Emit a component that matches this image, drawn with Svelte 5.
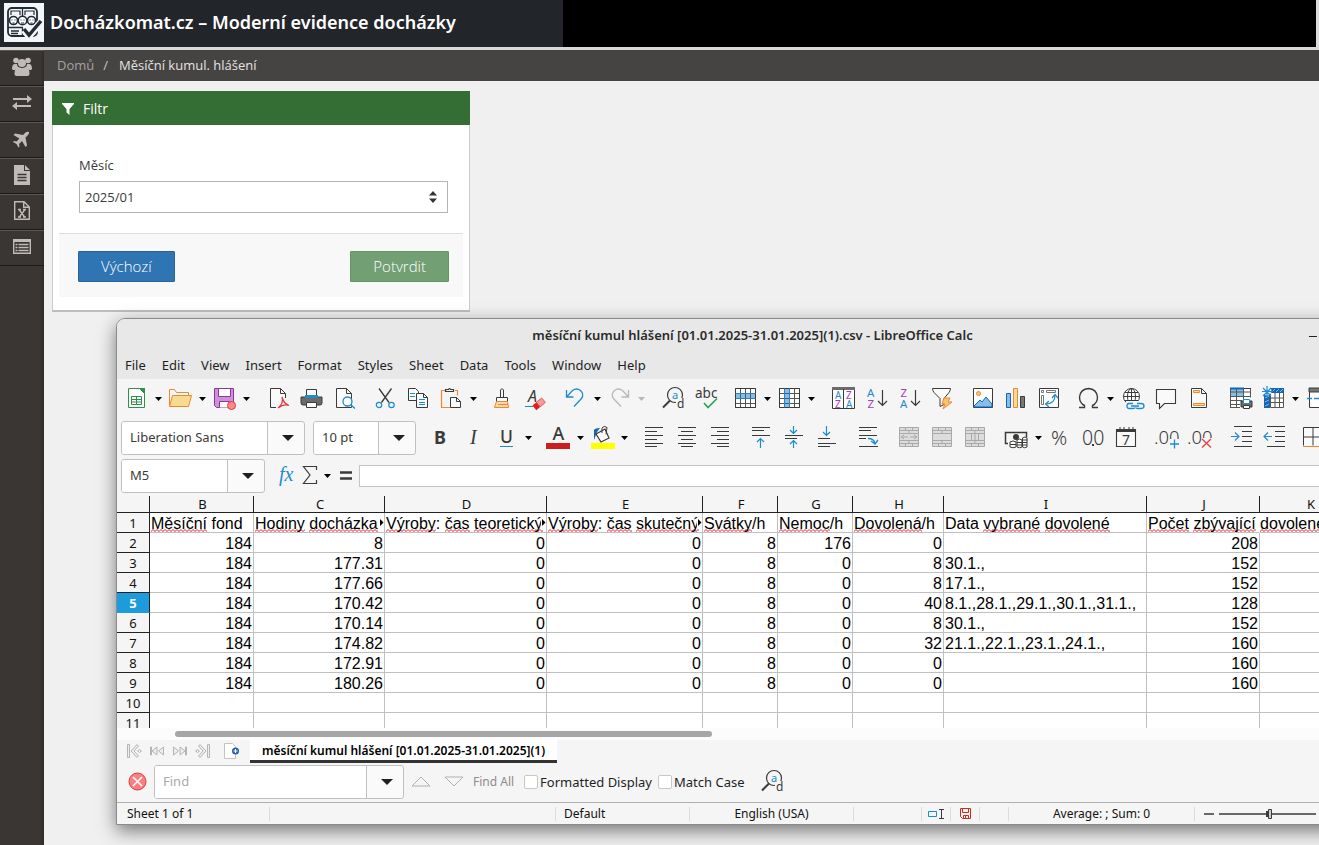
<script>
  const D = '#3a3a38';
  const B = '#1e8bcd';
  const line = (d, c = D, w = 1, fill = 'none') =>
    `<path d="${d}" fill="${fill}" stroke="${c}" stroke-width="${w}"/>`;
  const glyph = (t, x, y, size, c = D, extra = '') =>
    `<text x="${x}" y="${y}" font-size="${size}" fill="${c}" font-family="Noto Sans, sans-serif" ${extra}>${t}</text>`;
  const page = 'M4.5 2.5h10l5 5v14h-15z';
  const grid = 'M2.5 2.5h20v19h-20zM2.5 7.5h20M2.5 12.5h20M2.5 17.5h20M7.5 2.5v19M12.5 2.5v19M17.5 2.5v19';
  const loupe =
    `<circle cx="14" cy="9" r="7.5" fill="none" stroke="${D}" stroke-width="1.2"/>` +
    `<path d="M2 21.500l7-7" stroke="${D}" stroke-width="2"/><path d="M15 12h9v10h-9z" fill="#f5f5f5"/>` +
    glyph('a', 11, 12.5, 11, B) + glyph('d', 16, 21.5, 12);
  const merged = line('M2.500 2.500h19v19h-19zM2.500 5.500h19M2.500 8.500h19M2.500 15.500h19M2.500 18.500h19M8.500 2.500v3M15.500 2.500v3M12 5.500v3M8.500 18.500v3M15.500 18.500v3M12 15.500v3', '#a9a9a9', 1, '#dcdcdc');

  const icons = {
    new:
      line('M4.500 2.500h11l5 5v14h-16z', '#2f8f4b', 1, '#fff') + `<path d="M15 2h6v6z" fill="#2f8f4b"/>` +
      line('M7.500 10.500h10v8h-10zM7.500 13.500h10M7.500 16h10M12.500 10.500v8', '#2f8f4b'),
    open:
      line('M1.500 20.500v-17h5l2 3h12v3', '#ed8733', 1, '#fafafa') + line('M1.500 20.500l3-11h19l-3 11z', '#ed8733', 1, '#f8db8f'),
    save:
      line('M2.500 2.500h19v19h-17l-2-2z', '#8e35a0', 1, '#cf8fd9') + line('M6.500 2.500h12v8h-12z', '#8e35a0', 1, '#fff') +
      line('M7.500 21.500v-6h10v6', '#8e35a0', 1, '#fff') + `<circle cx="19.500" cy="19.500" r="4" fill="#f98b8b" stroke="#dd3b3b"/>`,
    pdf:
      line(page, D, 1, '#fafafa') + line('M14.500 2.500v5h5') +
      `<path d="M16 12h7v11h-13v-4z" fill="#f5f5f5"/>` +
      line('M12 22c4-3 5.500-6 4-11c1 5 3 7 7 8.500c-4-1.500-7-.5-11 2.500', '#e23c3c', 1.3),
    print:
      line('M7.500 10.500v-7h10v7', D, 1, '#fff') + `<path d="M2 11h21v6q0 2-2 2h-17q-2 0-2-2z" fill="#6b6b69" stroke="${D}"/><path d="M6 9h13v3h-13z" fill="${B}"/>` +
      line('M7.500 16.500h10v5h-10z', D, 1, '#fff'),
    preview:
      line(page, D, 1, '#fafafa') + line('M14.500 2.500v5h5') +
      `<circle cx="15.500" cy="15.500" r="4.500" fill="#fff" stroke="${B}" stroke-width="1.300"/>` + line('M19 19l4 3.500', B, 1.4),
    cut:
      line('M6 2.500l10 14M18.500 2.500l-10 14', D, 1.3) +
      `<circle cx="6" cy="19" r="2.700" fill="none" stroke="${B}" stroke-width="1.200"/><circle cx="18.500" cy="19" r="2.700" fill="none" stroke="${B}" stroke-width="1.200"/>`,
    copy:
      line('M2.500 2.500h7l3 3v9h-10z', D, 1, '#fafafa') + line('M4 7.500h5M4 10.500h5', B) +
      line('M10.500 7.500h7l4 4v10h-11z', D, 1, '#fafafa') + line('M17.500 7.500v4h4') + line('M13 13.500h6M13 16.500h6M13 18.500h6', B),
    paste:
      line('M7 4.500h-4.500v17h9M16 4.500h2.500v5', '#ed8733', 1.2) + line('M6.500 5.500v-2h3q1-2 2 0h3v2z', D, 1.2) +
      line('M11.500 11.500h6l4 4v6h-10z', D, 1, '#fafafa') + line('M17.500 11.500v4h4'),
    brush:
      line('M11.500 11v-7q1.500-3 3 0v7', D) + line('M7.500 15.500v-4h11v4z', D, 1, '#fff') +
      line('M7.500 15.500h11l1 6h-14z', '#ed8733', 1, '#fbd9a5') + line('M9 18.500h10', '#ed8733'),
    clear:
      glyph('A', 6, 16, 16, D, 'font-style="italic"') + line('M3 20.500h8', B) +
      `<g transform="rotate(-40 17 18)"><rect x="11" y="15" width="6" height="6" fill="#e02020"/><rect x="16" y="15" width="7" height="6" rx="1" fill="#f79a9a" stroke="#e05050" stroke-width=".8"/></g>`,
    undo: line('M3.500 4v7h7M3.500 11l6-6.500q4-3 8 0q4 4 1 8l-7.500 8', B, 1.3),
    redo: line('M21.500 4v7h-7M21.500 11l-6-6.500q-4-3-8 0q-4 4-1 8l7.500 8', '#b8b8b8', 1.3),
    find: loupe,
    abc: glyph('abc', 1, 12, 13.5) + line('M10 17l4 4.500l9-9', '#23a455', 1.6),
    row: `<path d="M3 2h19v20h-19z" fill="#fff"/><path d="M2 7h21v5h-21z" fill="#83beec"/>` + line(grid, '#555553') + line('M2.500 2.500h20v19h-20z') + line('M2.500 7.500h20M2.500 12.500h20', '#2a80c4'),
    col: `<path d="M3 2h19v20h-19z" fill="#fff"/><path d="M8 2h5v20h-5z" fill="#83beec"/>` + line(grid, '#555553') + line('M2.500 2.500h20v19h-20z') + line('M7.500 2.500v19M12.500 2.500v19', '#2a80c4'),
    sort:
      line('M1.500 1.500h22v21h-22z', D, 1, '#fff') + `<path d="M1 1h23v3h-23z" fill="#6b6b69"/>` + line('M12.500 3v19') +
      glyph('A', 4, 12.5, 10, B) + glyph('Z', 4, 21.5, 10, '#a83bb5') + glyph('Z', 15, 12.5, 10, '#a83bb5') + glyph('A', 15, 21.5, 10, B),
    az: glyph('A', 3, 10.5, 11.5, B) + glyph('Z', 3.5, 22, 11.5, '#a83bb5') + line('M18.500 4v15M14 15l4.500 4.500l4.500-4.500', D, 1.2),
    za: glyph('Z', 3.5, 10.5, 11.5, '#a83bb5') + glyph('A', 3, 22, 11.5, B) + line('M18.500 4v15M14 15l4.500 4.500l4.500-4.500', D, 1.2),
    filter: line('M2.500 2.500h18q0 2-1.500 4l-5 6v6l-4 2v-8l-6-6q-1.500-2-1.500-4z', D, 1, '#fafafa') + line('M14 12h6l-2 4h4l-9 7l2-5h-3z', '#ed8733', 1, '#fbc36b'),
    image:
      line('M2.500 2.500h19v19h-19z', D, 1, '#fff') + `<circle cx="7.500" cy="7.500" r="2" fill="#fbc36b" stroke="#ed8733"/>` +
      `<path d="M3 20l6-6l2 2l4-5l6 7v3h-18z" fill="#83beec" stroke="#1565b0"/>`,
    chart:
      line('M2.500 7.500h4v14h-4z', '#1565b0', 1, '#83beec') + line('M9.500 2.500h4v19h-4z', '#ed8733', 1, '#fbdd95') + line('M16.500 10.500h4v11h-4z', D, 1, '#777774'),
    pivot:
      line('M2.500 2.500h19v19h-19z', D, 1, '#fff') + line('M4.500 4.500h2v2h-2zM9.500 4.500h9v2h-9zM4.500 9.500h2v9h-2z', '#777774') +
      line('M9 18q9 0 9-9M12 15l-3.500 3l3.500 3M15 12l3-3.500l3 3.500', B, 1.2),
    omega: line('M3 21.500h5.500v-2q-5-2.500-5-8.500q1-8 9-8.500q8 .5 9 8.500q0 6-5 8.500v2h5.500', D, 1.4),
    link:
      `<circle cx="10.500" cy="10.500" r="8" fill="#fff" stroke="${D}"/><ellipse cx="10.500" cy="10.500" rx="4" ry="8" fill="none" stroke="${D}"/>` +
      line('M2.500 10.500h16M10.500 2.500v16M4 6.500h13M4 14.500h13') + `<path d="M5 15h19v8h-19z" fill="#f5f5f5"/>` +
      line('M12 17.500h-4q-2 0-2 2.500t2 2.500h4q2 0 2-1M16 17.500h4q3 0 3 2.500t-3 2.500h-3q-2 0-2-1M10 20h8', B, 1.3),
    comment: line('M2.500 3.500h19v14h-11l-5 5v-5h-3z', D, 1.1, '#fafafa'),
    header: line(page, D, 1, '#fafafa') + line('M14.500 2.500v5h5') + line('M6.500 4.500h6v2h-6zM6.500 17.500h11v2h-11z', '#ed8733', 1, '#fbdd95'),
    area:
      `<path d="M2 2h20v20h-20z" fill="#fff"/><path d="M2 2h14v8h-14z" fill="#83beec"/>` + line('M2.500 2v19M22.500 2.500v9M2 6h20M2 10.500h20M2 14.500h12M2 18.500h10M2 21.500h10M8.500 2v20M15.500 2v12', '#555553') +
      line('M2 2.500h21', D) + line('M2 2.500h14', '#1565b0', 2) + `<path d="M13 15h11v6h-11z" fill="#6b6b69" stroke="${D}"/>` + line('M15.500 17.500v-4h6v4z', B, 1, '#fff') + line('M15.500 19.500h6v3h-6z', D, 1, '#fff'),
    freeze:
      `<path d="M4 3h19v19h-19z" fill="#fff"/>` + line('M9.500 7v14.500h13v-19M9 12h13M9 16.500h13M14 7v14M18.500 7v14', '#555553') +
      `<path d="M9 2h14v5h-14zM3 8h6v14h-6z" fill="#1565b0"/>` + line('M11 6l3-3M15 6l3-3M19 6l3-3M4 12l4-2M4 16l4-2M4 20l4-2', '#83beec') + `<circle cx="6" cy="5" r="4.500" fill="#f5f5f5"/>` + line('M6 0v11M1 5.500h11M2 2l8 8M10 2l-8 8', '#1e8bcd', 1.2),
    split: line('M4.500 2.500h19v19h-19z', D, 1, '#fff') + `<path d="M4 2h20v4h-20z" fill="#777774" stroke="${D}"/>` + line('M2 12.500h5M9 12.500h5', B, 1.3),
    bold: glyph('B', 6, 19, 18, D, 'font-weight="700"'),
    italic: glyph('I', 9, 19, 20, D, 'font-style="italic" style="font-family: Liberation Serif, serif"'),
    underline: glyph('U', 6, 18, 17.5, D, 'font-weight="500"') + line('M6 21.500h13', B),
    color: glyph('A', 6.5, 15, 18, D, 'font-weight="500"') + `<path d="M0 18h24v6h-24z" fill="#c91f1f"/>`,
    fill:
      `<path d="M4 15v-10q1-2 6-2l-3 4z" fill="#1565b0"/>` + line('M6 9l9-5l4 9l-8 4z', D, 1.2, '#fafafa') + line('M12 8v-5q2-3 5-.5l-1 7', D) + `<path d="M1 18h24v6h-24z" fill="#ff0"/>`,
    left: line('M3 2.500h18M3 6.500h12M3 10.500h18M3 14.500h12M3 18.500h18M3 21.500h12'),
    center: line('M3 2.500h18M6 6.500h12M3 10.500h18M6 14.500h12M3 18.500h18M6 21.500h12'),
    right: line('M3 2.500h18M9 6.500h12M3 10.500h18M9 14.500h12M3 18.500h18M9 21.500h12'),
    top: line('M3 2.500h18M3 5.500h12M3 10.500h18') + line('M11.500 23v-9M8 17l3.500-3.500l3.500 3.500', B, 1.2),
    middle: line('M3 10.500h18M3 13.500h12') + line('M11.500 1v7M8 5l3.500 3.500l3.500-3.500M11.500 23v-7M8 19l3.500-3.500l3.500 3.500', B, 1.2),
    bottom: line('M3 13.500h12M3 18.500h18M3 21.500h12') + line('M11.500 1v9M8 7l3.500 3.500l3.500-3.500', B, 1.2),
    wrap: line('M3 2.500h18M3 5.500h12M3 10.500h18M3 13.500h7M3 21.500h19') + line('M12 13.500q6 0 7 5M15 16l4 3l3-4', B, 1.3),
    merge: merged + line('M4 12h7M13 12h7M7 10l-3 2l3 2M17 10l3 2l-3 2', '#a9a9a9'),
    mergec: merged,
    unmerge: merged + line('M8.500 8.500v7M12 8.500v7M15.500 8.500v7', '#a9a9a9'),
    currency:
      line('M4 18.500h-2.500v-11h21v5', D, 1.5) + `<circle cx="12" cy="12" r="3" fill="${D}"/>` +
      `<path d="M6 17q3-2 6 0v5q-3 1.500-6 0zM13 15q2.500-2 5 0v7q-2.500 1.500-5 0zM18.500 13q2.500-2 4.500 0v9q-2.500 1.500-4.500 0z" fill="#fff" stroke="${D}"/>` + line('M6 19.500h6M13 17.500h10M13 20h10M18.500 15h5'),
    percent: glyph('%', 3, 19.5, 20, D, 'font-weight="300"'),
    number: glyph('00', 1, 19.5, 19.5, D, 'font-weight="300"') + `<path d="M11 19h2v2h-2z" fill="${D}"/>`,
    date: line('M2.500 4.500h19v17h-19z', D, 1.1, '#fafafa') + `<path d="M2 4h20v3h-20z" fill="${D}"/>` + line('M6 2v3M10 2v3M15 2v3M19 2v3') + glyph('7', 8, 19.5, 14),
    adddec: glyph('.00', -1, 18.5, 18.5, D, 'font-weight="300"') + `<path d="M15 14h10v10h-10z" fill="#f5f5f5"/>` + line('M19.500 14.500v9M15 19h9', B, 1.3),
    deldec: glyph('.00', -1, 18.5, 18.5, D, 'font-weight="300"') + `<path d="M14 13h11v10h-11z" fill="#f5f5f5"/>` + line('M14 14l9 8.500M23 14l-9 8.500', '#e84040', 1.3),
    indent: line('M5 1.500h18M13 6.500h10M13 11.500h10M13 16.500h10M5 21.500h18') + line('M2 11.500h8M6 7.500l4 4l-4 4', B, 1.2),
    outdent: line('M5 1.500h18M13 6.500h10M13 11.500h10M13 16.500h10M5 21.500h18') + line('M2 11.500h8M6 7.500l-4 4l4 4', B, 1.2),
    borders: line('M2.500 20.500v-18h19v18M2.500 12h19M12 2.500v18', D, 1, '#fafafa') + line('M2 21.500h20', '#ed8733'),
    fx: `<text x="5" y="18" font-size="20" fill="${B}" font-style="italic" font-family="Liberation Serif, serif">fx</text>`,
    sum: line('M18.500 7v-3.500h-13l6.500 8.500l-6.500 8.500h13v-3.500', D, 1.2),
    equals: line('M7 9.500h12M7 15.500h12', D, 2.4),
  };

  const formatA = [
    { gap: 1, items: ['new', '>', 'open', '>', 'save', '>'] },
    { gap: 10, items: ['pdf', 'print', 'preview'] },
    { gap: 8, items: ['cut', 'copy', 'paste', '>'] },
    { gap: 6, items: ['brush', 'clear'] },
    { gap: 8, items: ['undo', '>', 'redo', '-'] },
    { gap: 10, items: ['find', 'abc'] },
    { gap: 6, items: ['row', '>', 'col', '>'] },
    { gap: 10, items: ['sort', 'az', 'za', 'filter'] },
    { gap: 8, items: ['image', 'chart', 'pivot'] },
    { gap: 6, items: ['omega', '>'] },
    { gap: 1, items: ['link', 'comment', 'header'] },
    { gap: 8, items: ['area', 'freeze', '>', 'split'] },
  ];
  const formatB = [
    { gap: 8, items: ['bold', 'italic', 'underline', '>'] },
    { gap: 8, items: ['color', '>', 'fill', '>'] },
    { gap: 8, items: ['left', 'center', 'right'] },
    { gap: 8, items: ['top', 'middle', 'bottom'] },
    { gap: 8, items: ['wrap'] },
    { gap: 8, items: ['merge', 'mergec', 'unmerge'] },
    { gap: 8, items: ['currency', '>', 'percent', 'number', 'date'] },
    { gap: 8, items: ['adddec', 'deldec'] },
    { gap: 8, items: ['indent', 'outdent'] },
    { gap: 6, items: ['borders'] },
  ];

  const menus = ['File', 'Edit', 'View', 'Insert', 'Format', 'Styles', 'Sheet', 'Data', 'Tools', 'Window', 'Help'];

  const columns = [
    { id: 'B', width: 104, words: ['*Měsíční', ' fond'] },
    { id: 'C', width: 131, words: ['*Hodiny', ' ', '*docházka'], more: true },
    { id: 'D', width: 162, words: ['*Výroby', ': ', '*čas', ' ', '*teoretický'], more: true },
    { id: 'E', width: 156, words: ['*Výroby', ': ', '*čas', ' ', '*skutečný'], more: true },
    { id: 'F', width: 75, words: ['*Svátky', '/h'] },
    { id: 'G', width: 75, words: ['*Nemoc', '/h'] },
    { id: 'H', width: 91, words: ['*Dovolená', '/h'] },
    { id: 'I', width: 203, words: ['Data ', '*vybrané', ' ', '*dovolené'] },
    { id: 'J', width: 113, words: ['*Počet', ' ', '*zbývající', ' ', '*dovolené'], spill: true },
    { id: 'K', width: 101, words: [] },
  ];
  const rows = [
    ['184', '8', '0', '0', '8', '176', '0', '', '208', ''],
    ['184', '177.31', '0', '0', '8', '0', '8', '30.1.,', '152', ''],
    ['184', '177.66', '0', '0', '8', '0', '8', '17.1.,', '152', ''],
    ['184', '170.42', '0', '0', '8', '0', '40', '8.1.,28.1.,29.1.,30.1.,31.1.,', '128', ''],
    ['184', '170.14', '0', '0', '8', '0', '8', '30.1.,', '152', ''],
    ['184', '174.82', '0', '0', '8', '0', '32', '21.1.,22.1.,23.1.,24.1.,', '160', ''],
    ['184', '172.91', '0', '0', '8', '0', '0', '', '160', ''],
    ['184', '180.26', '0', '0', '8', '0', '0', '', '160', ''],
    Array(10).fill(''),
    Array(10).fill(''),
  ];

  const nav = [
    '<circle cx="5" cy="4.500" r="2.800"/><circle cx="17" cy="4.500" r="2.800"/><circle cx="11" cy="7" r="4"/><path d="M1 13q0-5 3-5h2q0 3 2 3.500q-3 0-4 2.500h-2zM21 13q0-5-3-5h-2q0 3-2 3.500q3 0 4 2.500h2z"/><path d="M3.500 18q0-7 4-7q3.500 2 7 0q4 0 4 7q0 2-2 2h-11q-2 0-2-2z"/>',
    '<path d="M2 6h14v-3l5 4l-5 4v-3h-14zM20 13h-14v-3l-5 4l5 4v-3h14z"/>',
    '<path d="M18 4q-2-1-4 1l-2 2l-8-1.500l-1.500 1.500l6 3.500l-3 3l-2.500-.5l-1 1l3.500 2l2 3.500l1-1l-.5-2.500l3-3l3.500 6l1.500-1.500l-1.500-8l2-2q2-2 1.500-3.500z"/>',
    '<path d="M3 1h10v6h6v14h-16zM14 1l5 5h-5z"/><path d="M6.500 10.500h9M6.500 13.500h9M6.500 16.500h9" stroke="#3a3633" stroke-width="1.300"/>',
    '<path d="M3.700 1.700h9.300l5.300 5.300v12.300h-14.600zM12.700 2v5.300h5.300" fill="none" stroke="#c0bbb8" stroke-width="1.400"/><path d="M8 9.500l6 8M14 9.500l-6 8M7 9.500h3M12 9.500h3M7 17h3M12 17h3" stroke="#c0bbb8" stroke-width="1.300"/>',
    '<path d="M2.700 3.700h16.600v13.600h-16.600z" fill="none" stroke="#c0bbb8" stroke-width="1.400"/><path d="M2 3h18v3h-18z"/><path d="M4.500 8.500h2M4.500 11.500h2M4.500 14.500h2M7.500 8.500h10M7.500 11.500h10M7.500 14.500h10" stroke="#c0bbb8" stroke-width="1.500"/>',
  ];
  const navNames = ['Zaměstnanci', 'Průchody', 'Nepřítomnosti', 'Sestavy', 'Exporty', 'Seznam'];

  let month = $state('2025/01');
  let search = $state('');
</script>

{#snippet tools(groups)}
  {#each groups as g}
    <div class="group gap{g.gap}">
      {#each g.items as it}
        {#if it === '>' || it === '-'}
          <button class="drop" class:off={it === '-'} aria-label="More"><svg width="7" height="4" viewBox="0 0 7 4"><path d="M0 0h7l-3.500 4z" /></svg></button>
        {:else}
          <button class="tool" aria-label={it}><svg width="25" height="25" viewBox="0 0 25 25">{@html icons[it]}</svg></button>
        {/if}
      {/each}
    </div>
  {/each}
{/snippet}

{#snippet open()}
  <button class="open" aria-label="Open list"><svg width="12" height="6" viewBox="0 0 12 6"><path d="M0 0h12l-6 6z" fill="#1f1f1f" /></svg></button>
{/snippet}

<div class="page">
  <header>
    <div class="brand">
      <svg class="logo" width="40" height="39" viewBox="0 0 40 39" fill="none" stroke="#222c35" stroke-width="2">
        <path d="M0 0h40v39h-40z" fill="#f3f6f8" stroke="none" />
        <rect x="4" y="5" width="29" height="28" rx="4" stroke-width="1.800" />
        <path d="M18.500 5v8M4 24.500h15M18.500 25v8M7 28h8M7 30.500h7" stroke-width="1.300" />
        <path d="M7 12v-4h9v4M21 12v-4h9v4" stroke-width="1.200" />
        <circle cx="9.500" cy="17.500" r="4" fill="#fff" stroke-width="1.600" /><circle cx="27.500" cy="17.500" r="4" fill="#fff" stroke-width="1.600" /><circle cx="18.500" cy="17.500" r="4.300" fill="#fff" stroke-width="1.600" />
        <path d="M7.500 17h1M10.500 17h1M16.500 17h1M19.500 17h1M25.500 17h1M28.500 17h1M17 20h3M8.500 20h2M26.500 20h2" stroke-width="1.200" />
        <path d="M20 27l5 6l12-14" stroke="#f3f6f8" stroke-width="7" /><path d="M20 26l5 6l12-14" stroke-width="3.400" />
      </svg>
      <h1>Docházkomat.cz – Moderní evidence docházky</h1>
    </div>
    <div class="blank"></div>
  </header>

  <div class="body">
    <nav class="side">
      {#each nav as n, i}
        <a href="#{i}" aria-label={navNames[i]}><svg width="22" height="22" viewBox="0 0 22 22" fill="#c0bbb8">{@html n}</svg></a>
      {/each}
    </nav>
    <main>
      <div class="crumbs"><a href="#home">Domů</a><span>/</span><b>Měsíční kumul. hlášení</b></div>
      <form class="panel" onsubmit={(e) => e.preventDefault()}>
        <h2>
          <svg width="12" height="12" viewBox="0 0 12 12"><path d="M0 0h12v1l-4.500 5v6l-3-2.500v-3.500l-4.500-5z" fill="#fff" /></svg>Filtr
        </h2>
        <div class="field">
          <label for="month">Měsíc</label>
          <div class="select">
            <select id="month" bind:value={month}><option>2025/01</option></select>
            <svg width="8" height="12" viewBox="0 0 8 12"><path d="M0 4.500l4-4.500l4 4.500zM0 7.500h8l-4 4.500z" fill="#333" /></svg>
          </div>
        </div>
        <div class="actions">
          <button type="reset" class="blue">Výchozí</button>
          <button type="submit" class="green">Potvrdit</button>
        </div>
      </form>
    </main>
  </div>

  <section class="window">
    <div class="title">
      <h2>měsíční kumul hlášení [01.01.2025-31.01.2025](1).csv - LibreOffice Calc</h2>
      <button aria-label="Minimize"><i></i></button>
    </div>
    <div class="menu">
      {#each menus as m}<button>{m}</button>{/each}
    </div>
    <div class="bar">{@render tools(formatA)}</div>
    <div class="bar">
      <div class="combo font"><input aria-label="Font name" value="Liberation Sans" />{@render open()}</div>
      <div class="combo size"><input aria-label="Font size" value="10 pt" />{@render open()}</div>
      {@render tools(formatB)}
    </div>
    <div class="bar entry">
      <div class="combo cellref"><input aria-label="Name box" value="M5" />{@render open()}</div>
      <div class="formula-tools">
        {#each ['fx', 'sum', '>', 'equals'] as it}
          {#if it === '>'}
            <button class="drop" aria-label="More"><svg width="7" height="4" viewBox="0 0 7 4"><path d="M0 0h7l-3.500 4z" /></svg></button>
          {:else}
            <button class="mini" aria-label={it}><svg width="25" height="25" viewBox="0 0 25 25">{@html icons[it]}</svg></button>
          {/if}
        {/each}
      </div>
      <input class="formula" aria-label="Formula" />
    </div>

    <div class="sheet">
      <table>
        <colgroup><col style="width: 33px" />{#each columns as c}<col style="width: {c.width}px" />{/each}</colgroup>
        <thead><tr><th></th>{#each columns as c}<th>{c.id}</th>{/each}</tr></thead>
        <tbody>
          <tr>
            <th>1</th>
            {#each columns as c}
              <td class="head" class:spill={c.spill}>{#each c.words as w}{#if w[0] === '*'}<u>{w.slice(1)}</u>{:else}{w}{/if}{/each}{#if c.more}<svg class="more" width="5" height="9" viewBox="0 0 5 9"><path d="M0 0h5v9h-5z" fill="#fff" /><path d="M1 1l3.500 3.500l-3.500 3.500z" /></svg>{/if}</td>
            {/each}
          </tr>
          {#each rows as r, i}
            <tr class:current={i === 3}>
              <th>{i + 2}</th>
              {#each r as v, j}<td class:text={j === 7}>{v}</td>{/each}
            </tr>
          {/each}
        </tbody>
      </table>
    </div>
    <div class="scroll"><div class="thumb"></div></div>

    <div class="tabs">
      <button aria-label="First sheet"><svg width="16" height="16" viewBox="0 0 16 16"><path d="M1.500 1.500h2v13h-2zM11 1.500l-6 6.500l6 6.500l1.500-1.500l-4.500-5l4.500-5zM13.500 6.500l-2 1.500l2 1.500l2-1.500z" /></svg></button>
      <button aria-label="Previous sheet"><svg width="16" height="16" viewBox="0 0 16 16"><path d="M1.500 4v8h1v-8zM8 4v8l-5-4zM14.500 4v8l-5-4z" /></svg></button>
      <button aria-label="Next sheet"><svg width="16" height="16" viewBox="0 0 16 16"><path d="M14.500 4v8h-1v-8zM8 4v8l5-4zM1.500 4v8l5-4z" /></svg></button>
      <button aria-label="Last sheet"><svg width="16" height="16" viewBox="0 0 16 16"><path d="M14.500 1.500h-2v13h2zM5 1.500l6 6.500l-6 6.500l-1.500-1.500l4.500-5l-4.500-5zM2.500 6.500l-2 1.500l2 1.500l2-1.500z" /></svg></button>
      <button class="add" aria-label="Add sheet"><svg width="18" height="16" viewBox="0 0 18 16"><path d="M1.500.5h8l3 3v12h-11z" fill="#fff" stroke="#c4c4bc" /><circle cx="12.500" cy="8" r="3.500" fill="#2a5ea8" stroke="none" /><path d="M12.500 6v4M10.500 8h4" stroke="#fff" stroke-width="1.200" /></svg></button>
      <button class="tab">měsíční kumul hlášení [01.01.2025-31.01.2025](1)</button>
    </div>

    <div class="findbar">
      <button class="close" aria-label="Close find bar"><svg width="19" height="19" viewBox="0 0 19 19"><circle cx="9.500" cy="9.500" r="8.500" fill="#f98080" stroke="#d93c3c" /><path d="M5 5l9 9M14 5l-9 9" stroke="#fff" stroke-width="1.500" /></svg></button>
      <div class="combo search"><input aria-label="Find" placeholder="Find" bind:value={search} />{@render open()}</div>
      <button class="step" aria-label="Find previous"><svg width="20" height="11" viewBox="0 0 20 11"><path d="M1 10l9-9l9 9z" /></svg></button>
      <button class="step" aria-label="Find next"><svg width="20" height="11" viewBox="0 0 20 11"><path d="M1 1h18l-9 9z" /></svg></button>
      <button class="all">Find All</button>
      <label><input type="checkbox" />Formatted Display</label>
      <label><input type="checkbox" />Match Case</label>
      <button class="tool" aria-label="Find and replace"><svg width="25" height="25" viewBox="0 0 25 25">{@html icons.find}</svg></button>
    </div>

    <footer>
      <span class="w-sheet">Sheet 1 of 1</span>
      <span class="w-info"></span>
      <span class="w-style">Default</span>
      <span class="w-lang">English (USA)</span>
      <span class="w-gap"></span>
      <span class="w-icon"><svg width="17" height="12" viewBox="0 0 17 12"><path d="M.5 3.500h8v5h-8z" fill="none" stroke={B} /><path d="M11 1.500h5M11 10.500h5M13.500 1.500v9" stroke={D} /></svg></span>
      <span class="w-icon"><svg width="11" height="11" viewBox="0 0 11 11"><path d="M.5.5h10v10h-8l-2-2zM2.500.500v4h6v-4M3.500 10.500v-3h5v3M5.500 8v2" fill="none" stroke="#d42a1c" /></svg></span>
      <span class="w-icon"></span>
      <span class="w-sum">Average: ; Sum: 0</span>
      <span class="w-zoom"><svg width="120" height="12" viewBox="0 0 120 12"><path d="M0 6h10M15 6h97" stroke={D} stroke-width="1.500" /><path d="M62 3h3v6h-3z" fill={D} /><path d="M64.500 1.500h3v9h-3z" fill="#ccc" stroke={D} /></svg></span>
    </footer>
  </section>
</div>

<style>
  :global(body) { margin: 0; background: #f0f0f0; }
  .page {
    position: relative; display: flex; flex-direction: column; min-height: 100vh; overflow: hidden;
    font: 13px/20px 'Open Sans', 'Noto Sans', sans-serif; color: #393939; background: #f0f0f0;
  }
  * { box-sizing: border-box; }
  button { border: 0; padding: 0; background: none; font: inherit; color: inherit; display: flex; align-items: center; justify-content: center; }
  svg { display: block; flex: none; overflow: visible; }
  h1, h2 { margin: 0; }

  header { display: flex; height: 50px; background: #dcdcdc; border-bottom: 3px solid #d8d8d8; padding-right: 3px; }
  .brand { display: flex; align-items: center; gap: 6px; width: 563px; padding: 0 4px 2px; background: #222529; }
  h1 { font: 600 18px/26px 'Noto Sans', sans-serif; color: #fff; white-space: nowrap; padding-bottom: 2px; }
  .blank { flex: 1; background: #000; }

  .body { display: flex; flex: 1; }
  .side { width: 44px; background: linear-gradient(90deg, #3a3633 92%, #2e2b29); }
  .side a { display: flex; align-items: center; justify-content: center; height: 36px; padding: 0 1px 2px 0; border-top: 1px solid #5a5755; border-bottom: 1px solid #1b1a19; }
  main { flex: 1; }
  .crumbs { display: flex; gap: 9px; height: 31px; align-items: center; padding: 0 13px 2px; background: #464443; color: #c8c4c0; }
  .crumbs a { color: #a5a29f; text-decoration: none; }
  .crumbs b { font-weight: 400; color: #e4e2e0; padding-left: 2px; }

  .panel { width: 418px; margin: 10px 8px; background: #fff; border: 1px solid #ccc; border-top: 0; border-bottom: 2px solid #bdbdbd; padding-bottom: 13px; }
  .panel h2 { display: flex; align-items: center; gap: 9px; height: 34px; margin: 0 -1px; padding: 1px 10px 0; background: #356e35; color: #fff; font-size: 14px; font-weight: 400; }
  .field { display: flex; flex-direction: column; gap: 6px; padding: 30px 21px 20px 26px; }
  .select { display: grid; align-items: center; }
  .select > * { grid-area: 1 / 1; }
  .select svg { justify-self: end; margin-right: 11px; pointer-events: none; }
  select { appearance: none; height: 32px; border: 1px solid #b5b5b5; border-radius: 0; background: #fff; padding: 0 5px; font: inherit; color: inherit; }
  .actions { display: flex; justify-content: space-between; margin: 0 6px; padding: 17px 14px 15px 19px; background: #f8f8f8; border-top: 1px solid #ddd; }
  .actions button { height: 31px; padding: 0 22px 2px; font-size: 15px; font-weight: 300; color: #fff; border-radius: 1px; }
  .blue { background: #3075b3; border: 1px solid #2a6496; }
  .green { background: #729f74; border: 1px solid #64945f; }

  .window {
    position: absolute; top: 318px; left: 116px; right: -70px; overflow: hidden;
    border: 1px solid #8a8a8a; border-radius: 9px 9px 0 0; background: #f5f5f5; color: #1f1f1f;
    box-shadow: 0 6px 18px rgba(0, 0, 0, 0.5); font: 13px/20px 'Noto Sans', sans-serif;
  }
  .title { display: grid; grid-template-columns: 1fr auto 1fr; align-items: center; height: 33px; padding-bottom: 2px; background: #e8e8e8; }
  .title h2 { grid-column: 2; font-size: 13px; font-weight: 600; white-space: nowrap; color: #2b2b2b; }
  .title button { justify-self: end; margin-right: 71px; padding-top: 4px; }
  .title i { width: 8px; height: 1px; background: #222; }
  .menu { display: flex; gap: 16px; height: 27px; padding: 0 8px 2px; background: #e8e8e8; }
  .bar { display: flex; align-items: center; height: 39px; padding-left: 2px; }
  .entry { padding-bottom: 2px; }
  .bar > * { flex: none; }
  .group, .formula-tools { display: flex; align-items: center; }
  .gap1 { margin-left: 1px; }
  .gap6 { margin-left: 6px; }
  .gap8 { margin-left: 8px; }
  .gap10 { margin-left: 10px; }
  .tool { width: 33px; height: 33px; flex: none; }
  .drop { width: 11px; height: 33px; flex: none; }
  .off { fill: #b8b8b8; }
  .mini { width: 24px; height: 33px; }
  .formula-tools { margin: 0 2px 0 9px; }
  .combo { display: flex; height: 34px; flex: none; border: 1px solid #c0c0c0; border-radius: 3px; background: #fafafa; margin-left: 2px; overflow: hidden; }
  .combo input { flex: 1; min-width: 0; border: 0; border-right: 1px solid #c0c0c0; padding: 0 8px 2px; background: #fff; font: 13px 'Noto Sans', sans-serif; color: #3a3a3a; outline: 0; }
  .combo input::placeholder { color: #aaa; }
  .open { width: 36px; padding-left: 4px; }
  .font { width: 184px; }
  .size { width: 103px; margin-left: 8px; }
  .cellref { width: 144px; }
  .bar > .formula { flex: 1; height: 22px; min-width: 0; border: 1px solid #c4c4c4; background: #fff; }

  .sheet { height: 232px; overflow: hidden; background: #fff; }
  table { table-layout: fixed; width: 1244px; border-spacing: 0; font: 16px/17px 'Liberation Sans', sans-serif; color: #000; }
  th { height: 20px; padding: 0; border-right: 1px solid #222; border-bottom: 1px solid #222; background: #f5f5f5; font: 13px/18px 'Noto Sans', sans-serif; color: #111; }
  thead th { height: 17px; line-height: 16px; padding-left: 2px; }
  td { height: 20px; padding: 2px 1px 0; border-right: 1px solid #c0c0c0; border-bottom: 1px solid #c0c0c0; text-align: right; white-space: nowrap; overflow: hidden; }
  .head, .text { text-align: left; }
  .head { position: relative; }
  .spill { overflow: visible; border-right-color: transparent; z-index: 1; }
  u { text-decoration: none; background: url("data:image/svg+xml,%3Csvg xmlns='http://www.w3.org/2000/svg' width='4' height='3'%3E%3Cpath d='M-.5 3L2 .5L4.500 3' fill='none' stroke='%23f02020'/%3E%3C/svg%3E") repeat-x left bottom; }
  .more { position: absolute; right: 0; top: 5px; }
  .current th { background: #1e9bdc; color: #fff; font-weight: 700; border-bottom-color: #1e9bdc; }
  .scroll { height: 12px; padding: 3px 0 0 58px; background: #fcfcfc; }
  .thumb { width: 537px; height: 6px; border-radius: 3px; background: #a6a6a6; }

  .tabs { display: flex; height: 23px; padding-left: 9px; }
  .tabs button { width: 23px; padding: 0 7px 2px 0; fill: #eee; stroke: #b4b4b4; }
  .tabs .add { width: 32px; padding: 0 4px 2px 0; }
  .tabs .tab { width: auto; padding: 1px 12px 0; background: #fff; border-bottom: 3px solid #333; font-size: 12px; font-weight: 600; color: #000; white-space: nowrap; line-height: 16px; }
  .findbar { display: flex; align-items: center; height: 39px; padding: 0 0 2px 11px; white-space: nowrap; }
  .search { width: 250px; margin: 0 7px 0 7px; }
  .step { margin-right: 13px; }
  .step path { fill: none; stroke: #b0b0b0; }
  .all { color: #8c8c8c; font-size: 12px; margin-right: 10px; margin-left: -4px; }
  label { display: flex; align-items: center; }
  .findbar label { gap: 2px; margin-right: 6px; }
  .findbar input[type='checkbox'] { appearance: none; width: 14px; height: 14px; margin: 0; border: 1px solid #c8c8c8; border-radius: 2px; background: #fff; }
  .findbar .tool { margin-left: 6px; }

  footer { display: flex; align-items: center; height: 22px; border-top: 1px solid #b0b0b0; font-size: 12px; line-height: 14px; color: #111; white-space: nowrap; }
  footer span { flex: none; display: flex; align-items: center; justify-content: center; height: 14px; border-right: 1px solid #dcdcdc; }
  footer .w-sheet { width: 153px; justify-content: flex-start; padding-left: 10px; }
  .w-info { width: 286px; }
  footer .w-style { width: 134px; justify-content: flex-start; padding-left: 8px; }
  .w-lang { width: 164px; }
  .w-gap { width: 68px; }
  .w-icon { width: 29px; }
  .w-sum { width: 186px; }
  footer .w-zoom { flex: 1; justify-content: flex-start; padding-left: 9px; border: 0; }
</style>
